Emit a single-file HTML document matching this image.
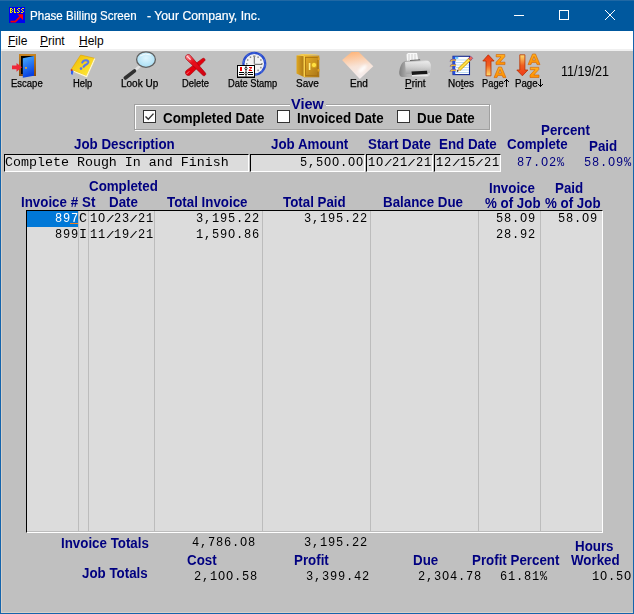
<!DOCTYPE html>
<html><head><meta charset="utf-8">
<style>
html,body{margin:0;padding:0;}
body{width:634px;height:614px;position:relative;overflow:hidden;background:#c0c0c0;font-family:"Liberation Sans",sans-serif;}
.a{position:absolute;}
.t{position:absolute;white-space:nowrap;line-height:16px;}
.b{font-family:"Liberation Sans",sans-serif;font-weight:bold;font-size:14px;color:#000080;transform:scaleX(0.952);transform-origin:0 0;}
.m{font-family:"Liberation Mono",monospace;font-size:13.33px;color:#000;letter-spacing:0.889px;transform:scaleX(0.9);transform-origin:0 0;}
.tb{font-family:"Liberation Sans",sans-serif;font-size:10px;color:#000;transform-origin:0 0;-webkit-text-stroke:0.25px #000;transform:scaleX(0.999);}
.box{position:absolute;background:#dcdcdc;border-top:1px solid #000;border-left:1px solid #000;border-right:1px solid #fff;border-bottom:1px solid #fff;box-sizing:border-box;}
.cb{position:absolute;width:13px;height:13px;box-sizing:border-box;border:1px solid #333;background:#fff;}
.sl{font-style:normal;display:inline-block;transform:translate(0.5px,1.6px) scale(1.25,0.62);}
.vl{position:absolute;width:1px;background:#bcbcbc;top:211px;height:320px;}
</style></head><body>
<!-- window frame -->
<div class="a" style="left:0;top:0;width:634px;height:614px;background:#c0c0c0;"></div>
<div class="a" style="left:0;top:0;width:1px;height:614px;background:#1464ac;"></div>
<div class="a" style="left:633px;top:0;width:1px;height:614px;background:#1464ac;"></div>
<div class="a" style="left:0;top:613px;width:634px;height:1px;background:#1464ac;"></div>
<div class="a" style="left:1px;top:51px;width:1px;height:562px;background:#d8d0c8;"></div>
<div class="a" style="left:1px;top:612px;width:632px;height:1px;background:#d8d0c8;"></div>
<!-- title bar -->
<div class="a" style="left:0;top:0;width:634px;height:31px;background:#00589e;"></div>
<div class="a" style="left:0;top:0;width:634px;height:1px;background:#2068a4;"></div>
<div class="t" style="left:30px;top:8px;font-size:12px;color:#fff;-webkit-text-stroke:0.2px #fff;transform:scaleX(0.963);transform-origin:0 0;">Phase Billing Screen</div>
<div class="t" style="left:147px;top:8px;font-size:12px;color:#fff;-webkit-text-stroke:0.2px #fff;transform:scaleX(1.02);transform-origin:0 0;">- Your Company, Inc.</div>
<!-- menu -->
<div class="a" style="left:1px;top:31px;width:632px;height:18px;background:#fff;"></div>
<div class="a" style="left:1px;top:49px;width:632px;height:2px;background:#f0f0f0;"></div>
<div class="t" style="left:8px;top:33px;font-size:12px;color:#000;"><u>F</u>ile</div>
<div class="t" style="left:40px;top:33px;font-size:12px;color:#000;"><u>P</u>rint</div>
<div class="t" style="left:79px;top:33px;font-size:12px;color:#000;"><u>H</u>elp</div>

<!-- toolbar labels -->
<div class="t tb" style="left:11px;top:76px;transform:scaleX(0.95);">Escape</div>
<div class="t tb" style="left:73px;top:76px;transform:scaleX(0.94);">Help</div>
<div class="t tb" style="left:121px;top:76px;">Look Up</div>
<div class="t tb" style="left:182px;top:76px;transform:scaleX(0.935);">Delete</div>
<div class="t tb" style="left:228px;top:76px;transform:scaleX(0.93);">Date Stamp</div>
<div class="t tb" style="left:296px;top:76px;">Save</div>
<div class="t tb" style="left:350px;top:76px;">End</div>
<div class="t tb" style="left:405px;top:76px;"><span style="text-decoration:underline">P</span>rint</div>
<div class="t tb" style="left:448px;top:76px;">No<span style="text-decoration:underline">t</span>es</div>
<div class="t tb" style="left:482px;top:76px;transform:scaleX(0.93);">Page</div>
<div class="t tb" style="left:515px;top:76px;transform:scaleX(0.97);">Page</div>
<div class="t" style="left:560.5px;top:63px;font-size:14px;color:#000;transform:scaleX(0.9);transform-origin:0 0;">11/19/21</div>

<!-- View group -->
<div class="a" style="left:135px;top:105px;width:356px;height:26px;box-sizing:border-box;border:1px solid #fff;"></div>
<div class="a" style="left:134px;top:104px;width:356px;height:26px;box-sizing:border-box;border:1px solid #a0a0a0;"></div>
<div class="a" style="left:290px;top:98px;width:36px;height:10px;background:#c0c0c0;"></div>
<div class="t b" style="left:291px;top:96px;font-size:14px;transform:scaleX(1.04);">View</div>
<div class="cb" style="left:143px;top:110px;"></div>
<div class="cb" style="left:277px;top:110px;"></div>
<div class="cb" style="left:397px;top:110px;"></div>
<div class="t b" style="left:163px;top:110px;color:#000;">Completed Date</div>
<div class="t b" style="left:297px;top:110px;color:#000;">Invoiced Date</div>
<div class="t b" style="left:417px;top:110px;color:#000;">Due Date</div>

<!-- job labels -->
<div class="t b" style="left:74px;top:136px;">Job Description</div>
<div class="t b" style="left:271px;top:136px;">Job Amount</div>
<div class="t b" style="left:368px;top:136px;">Start Date</div>
<div class="t b" style="left:439px;top:136px;">End Date</div>
<div class="t b" style="left:541px;top:122px;">Percent</div>
<div class="t b" style="left:507px;top:136px;">Complete</div>
<div class="t b" style="left:589px;top:138px;">Paid</div>

<div class="box" style="left:4px;top:154px;width:245px;height:18px;"></div>
<div class="box" style="left:250px;top:154px;width:115px;height:18px;"></div>
<div class="box" style="left:366px;top:154px;width:67px;height:18px;"></div>
<div class="box" style="left:434px;top:154px;width:67px;height:18px;"></div>
<div class="t m" style="left:5px;top:155px;letter-spacing:0;transform:scaleX(0.999);">Complete Rough In and Finish</div>
<div class="t m" style="left:300px;top:155px;">5,5OO.OO</div>
<div class="t m" style="left:368px;top:155px;">1O<i class="sl">/</i>21<i class="sl">/</i>21</div>
<div class="t m" style="left:436px;top:155px;">12<i class="sl">/</i>15<i class="sl">/</i>21</div>
<div class="t m" style="left:517px;top:155px;color:#000080;">87.O2%</div>
<div class="t m" style="left:584px;top:155px;color:#000080;">58.O9%</div>

<!-- grid headers -->
<div class="t b" style="left:89px;top:178px;">Completed</div>
<div class="t b" style="left:21px;top:194px;">Invoice #</div>
<div class="t b" style="left:82px;top:194px;">St</div>
<div class="t b" style="left:109px;top:194px;">Date</div>
<div class="t b" style="left:167px;top:194px;">Total Invoice</div>
<div class="t b" style="left:283px;top:194px;">Total Paid</div>
<div class="t b" style="left:383px;top:194px;">Balance Due</div>
<div class="t b" style="left:489px;top:180px;">Invoice</div>
<div class="t b" style="left:485px;top:195px;">% of Job</div>
<div class="t b" style="left:555px;top:180px;">Paid</div>
<div class="t b" style="left:545px;top:195px;">% of Job</div>

<!-- grid -->
<div class="a" style="left:26px;top:210px;width:577px;height:323px;background:#dcdcdc;box-sizing:border-box;border-top:1px solid #000;border-left:1px solid #000;border-right:1px solid #fff;border-bottom:1px solid #fff;"></div>
<div class="a" style="left:27px;top:531px;width:575px;height:1px;background:#bcbcbc;"></div>
<div class="vl" style="left:78px;"></div>
<div class="vl" style="left:88px;"></div>
<div class="vl" style="left:154px;"></div>
<div class="vl" style="left:262px;"></div>
<div class="vl" style="left:370px;"></div>
<div class="vl" style="left:478px;"></div>
<div class="vl" style="left:540px;"></div>
<div class="a" style="left:27px;top:211px;width:51px;height:16px;background:#0078d7;"></div>
<div class="a" style="left:70px;top:223px;width:8px;height:1px;background:#f08020;"></div>
<!-- row 1 -->
<div class="t m" style="left:55px;top:211px;color:#fff;">897</div>
<div class="t m" style="left:79px;top:211px;letter-spacing:0;transform:scaleX(0.999);">C</div>
<div class="t m" style="left:90px;top:211px;">1O<i class="sl">/</i>23<i class="sl">/</i>21</div>
<div class="t m" style="left:195.5px;top:211px;">3,195.22</div>
<div class="t m" style="left:303.5px;top:211px;">3,195.22</div>
<div class="t m" style="left:495.5px;top:211px;">58.O9</div>
<div class="t m" style="left:557.5px;top:211px;">58.O9</div>
<!-- row 2 -->
<div class="t m" style="left:55px;top:227px;">899</div>
<div class="t m" style="left:79px;top:227px;letter-spacing:0;transform:scaleX(0.999);">I</div>
<div class="t m" style="left:90px;top:227px;">11<i class="sl">/</i>19<i class="sl">/</i>21</div>
<div class="t m" style="left:195.5px;top:227px;">1,59O.86</div>
<div class="t m" style="left:495.5px;top:227px;">28.92</div>

<!-- totals -->
<div class="t b" style="left:61px;top:535px;">Invoice Totals</div>
<div class="t m" style="left:192px;top:535px;">4,786.O8</div>
<div class="t m" style="left:304px;top:535px;">3,195.22</div>
<div class="t b" style="left:575px;top:538px;">Hours</div>
<div class="t b" style="left:187px;top:552px;">Cost</div>
<div class="t b" style="left:294px;top:552px;">Profit</div>
<div class="t b" style="left:413px;top:552px;">Due</div>
<div class="t b" style="left:472px;top:552px;">Profit Percent</div>
<div class="t b" style="left:571px;top:552px;">Worked</div>
<div class="t b" style="left:82px;top:565px;">Job Totals</div>
<div class="t m" style="left:194px;top:569px;">2,1OO.58</div>
<div class="t m" style="left:306px;top:569px;">3,399.42</div>
<div class="t m" style="left:418px;top:569px;">2,3O4.78</div>
<div class="t m" style="left:500px;top:569px;">61.81%</div>
<div class="t m" style="left:592px;top:569px;">1O.5O</div>

<!-- ICONS -->
<svg class="a" style="left:0;top:0;" width="634" height="614" viewBox="0 0 634 614">
<defs>
<linearGradient id="gDoor" x1="0" y1="0" x2="0.3" y2="1"><stop offset="0" stop-color="#48b0ff"/><stop offset="1" stop-color="#0840e0"/></linearGradient>
<linearGradient id="gFrame" x1="0" y1="0" x2="0" y2="1"><stop offset="0" stop-color="#c88420"/><stop offset="1" stop-color="#8a4a08"/></linearGradient>
<linearGradient id="gBook" x1="0" y1="0" x2="1" y2="1"><stop offset="0" stop-color="#f0b800"/><stop offset="1" stop-color="#fff040"/></linearGradient>
<radialGradient id="gLens" cx="0.5" cy="0.4" r="0.6"><stop offset="0" stop-color="#e0f6ff"/><stop offset="1" stop-color="#a8def4"/></radialGradient>
<linearGradient id="gX" x1="0" y1="0" x2="1" y2="1"><stop offset="0" stop-color="#ff9aa0"/><stop offset="0.35" stop-color="#e8101c"/><stop offset="1" stop-color="#d00010"/></linearGradient>
<linearGradient id="gSafe" x1="0" y1="0" x2="1" y2="1"><stop offset="0" stop-color="#e8b028"/><stop offset="1" stop-color="#a87418"/></linearGradient>
<linearGradient id="gSafeL" x1="0" y1="0" x2="1" y2="0"><stop offset="0" stop-color="#e0a820"/><stop offset="1" stop-color="#a87418"/></linearGradient>
<linearGradient id="gEnd" x1="0" y1="0" x2="0.2" y2="1"><stop offset="0" stop-color="#ffb070"/><stop offset="0.6" stop-color="#f8e4d8"/><stop offset="1" stop-color="#f4ecec"/></linearGradient>
<linearGradient id="gPrn" x1="0" y1="0" x2="0" y2="1"><stop offset="0" stop-color="#f0f0f0"/><stop offset="0.45" stop-color="#d4d4d4"/><stop offset="1" stop-color="#a0a0a0"/></linearGradient>
<linearGradient id="gPrnL" x1="0" y1="0" x2="1" y2="0"><stop offset="0" stop-color="#808080"/><stop offset="0.25" stop-color="#b0b0b0"/><stop offset="1" stop-color="#d8d8d8"/></linearGradient>
<linearGradient id="gArrUp" x1="0" y1="0" x2="0" y2="1"><stop offset="0" stop-color="#f03818"/><stop offset="0.5" stop-color="#f06020"/><stop offset="1" stop-color="#ffe070"/></linearGradient>
<linearGradient id="gArrDn" x1="0" y1="1" x2="0" y2="0"><stop offset="0" stop-color="#f03818"/><stop offset="0.5" stop-color="#f06020"/><stop offset="1" stop-color="#ffe070"/></linearGradient>
<linearGradient id="gLet" x1="0" y1="0" x2="0" y2="1"><stop offset="0" stop-color="#ffb020"/><stop offset="1" stop-color="#ff9000"/></linearGradient>
</defs>

<!-- title icon BLSS -->
<rect x="9" y="7" width="16" height="16" fill="#0000f0"/>
<g fill="#f0f000">
<rect x="10" y="8" width="1" height="5"/><rect x="11" y="8" width="1" height="1"/><rect x="11" y="10" width="1" height="1"/><rect x="11" y="12" width="1" height="1"/><rect x="12" y="9" width="1" height="1"/><rect x="12" y="11" width="1" height="1"/>
<rect x="14" y="8" width="1" height="5"/><rect x="15" y="12" width="1" height="1"/>
<rect x="18" y="8" width="2" height="1"/><rect x="17" y="9" width="1" height="1"/><rect x="18" y="10" width="1" height="1"/><rect x="19" y="11" width="1" height="1"/><rect x="17" y="12" width="2" height="1"/>
<rect x="22" y="8" width="2" height="1"/><rect x="21" y="9" width="1" height="1"/><rect x="22" y="10" width="1" height="1"/><rect x="23" y="11" width="1" height="1"/><rect x="21" y="12" width="2" height="1"/>
</g>
<path d="M10.5 21.6 L15.3 21.6 L20.3 16.6" stroke="#f00000" stroke-width="1.7" fill="none"/>
<path d="M17.3 14.3 L23 14.3 L23 20 Z" fill="#ff0000"/>

<!-- Escape door -->
<rect x="19" y="54" width="17" height="22" fill="url(#gFrame)"/>
<rect x="21" y="56" width="13" height="18" fill="#000"/>
<path d="M22.8 58.3 L34 56 L34 75.8 L22.8 77.8 Z" fill="url(#gDoor)"/>
<rect x="25" y="67" width="2" height="1.8" fill="#d0a040"/>
<path d="M12 65.5 H16.5 V63 L22 67.3 L16.5 71.8 V69.2 H12 Z" fill="#f02838"/>

<!-- Help book -->
<path d="M80.6 55 L94.8 58.3 L86.7 76.3 L71 69.7 Z" fill="url(#gBook)" stroke="#e0a000" stroke-width="0.6"/>
<path d="M73 71 L86.7 76.6 L94.8 58.5" fill="none" stroke="#fff8d0" stroke-width="1.2"/>
<path d="M82.2 62.6 Q83.2 60.2 86 60.3 Q88.8 60.6 88.2 62.6 Q87.5 64.2 85 65.2 L83.6 66.8" fill="none" stroke="#5a78e8" stroke-width="2.1" stroke-linecap="round"/>
<circle cx="81" cy="68.6" r="1.3" fill="#5a78e8"/>
<path d="M71 70 L73.5 71 L72.5 75 L71 74 Z" fill="#3060f0"/>
<rect x="70.8" y="69.3" width="1.6" height="1.6" fill="#d02020"/>

<!-- Look Up magnifier -->
<path d="M140 66 L134 71" stroke="#e0e0e0" stroke-width="2.6"/>
<path d="M134.5 70.8 L125.3 78" stroke="#303030" stroke-width="3.6" stroke-linecap="round"/>
<ellipse cx="146" cy="59.6" rx="9.4" ry="7.8" fill="url(#gLens)" stroke="#606060" stroke-width="1.3"/>
<path d="M140 56 Q145 52.5 151 55" stroke="#ffffff" stroke-width="1" fill="none" opacity="0.8"/>

<!-- Delete X -->
<path d="M202.37 58.68 L186.53 70.39 L185.93 71.07 L185.58 71.91 L185.51 72.82 L185.72 73.70 L186.19 74.47 L186.87 75.07 L187.71 75.42 L188.62 75.49 L189.50 75.28 L190.27 74.81 L204.43 61.12 L204.76 60.74 L204.95 60.28 L205.00 59.78 L204.88 59.29 L204.62 58.87 L204.24 58.54 L203.78 58.35 L203.28 58.30 L202.79 58.42 Z" fill="#e4000c" stroke="#a8000a" stroke-width="0.7"/>
<path d="M186.26 59.22 L202.76 75.16 L203.18 75.49 L203.68 75.67 L204.21 75.69 L204.72 75.54 L205.16 75.24 L205.49 74.82 L205.67 74.32 L205.69 73.79 L205.54 73.28 L205.24 72.84 L190.34 55.38 L189.65 54.85 L188.82 54.55 L187.95 54.52 L187.11 54.77 L186.38 55.26 L185.85 55.95 L185.55 56.78 L185.52 57.65 L185.77 58.49 Z" fill="url(#gX)" stroke="#a8000a" stroke-width="0.7"/>
<path d="M187.2 56.3 L190.2 59.2" stroke="#ffd0d8" stroke-width="1.3" stroke-linecap="round"/>
<path d="M186.8 73.8 L189 71.6" stroke="#ff8090" stroke-width="0.9" stroke-linecap="round"/>
<!-- Date Stamp clock + calendar -->
<circle cx="254.3" cy="63.8" r="10.9" fill="#f2f2f2" stroke="#2a4ccc" stroke-width="2.3"/>
<circle cx="254.3" cy="63.8" r="10.9" fill="none" stroke="#7aa0ff" stroke-width="0.6" opacity="0.7" stroke-dasharray="3 4"/>
<rect x="253.20" y="55.40" width="2.2" height="1.6" fill="#8c8c8c"/><rect x="257.40" y="56.42" width="1.4" height="1.6" fill="#8c8c8c"/><rect x="260.18" y="59.20" width="1.4" height="1.6" fill="#8c8c8c"/><rect x="261.20" y="63.00" width="1.4" height="1.6" fill="#8c8c8c"/><rect x="260.18" y="66.80" width="1.4" height="1.6" fill="#8c8c8c"/><rect x="257.40" y="69.58" width="1.4" height="1.6" fill="#8c8c8c"/><rect x="253.60" y="70.60" width="1.4" height="1.6" fill="#8c8c8c"/><rect x="249.80" y="69.58" width="1.4" height="1.6" fill="#8c8c8c"/><rect x="247.02" y="66.80" width="1.4" height="1.6" fill="#8c8c8c"/><rect x="246.00" y="63.00" width="1.4" height="1.6" fill="#8c8c8c"/><rect x="247.02" y="59.20" width="1.4" height="1.6" fill="#8c8c8c"/><rect x="249.80" y="56.42" width="1.4" height="1.6" fill="#8c8c8c"/>
<path d="M254.3 63.8 L254.3 57 M254.3 64.3 L262 64.39999999999999" stroke="#606060" stroke-width="1"/>
<rect x="237.5" y="65.5" width="17" height="12" fill="#fff" stroke="#000" stroke-width="1"/>
<rect x="237" y="76.5" width="18" height="1.3" fill="#000"/>
<rect x="240" y="67" width="2" height="4" fill="#f00000"/>
<path d="M249 67 h3 v1 l-2 2 h2 v1 h-3.2 v-1 l2 -2 h-1.8z" fill="#f00000"/>
<rect x="239" y="72" width="5" height="1" fill="#000"/><rect x="239" y="74" width="5" height="1" fill="#000"/>
<rect x="248" y="72" width="5" height="1" fill="#000"/><rect x="248" y="74" width="5" height="1" fill="#000"/>
<rect x="245.5" y="66" width="1" height="11" fill="#303030"/><circle cx="246" cy="68.5" r="1.1" fill="#fff" stroke="#000" stroke-width="0.8"/><circle cx="246" cy="73.5" r="1.1" fill="#fff" stroke="#000" stroke-width="0.8"/>

<!-- Save safe -->
<path d="M296.5 55.5 L304.5 54.3 L304.5 77.3 L296.5 73.5 Z" fill="url(#gSafeL)"/>
<path d="M296.5 55.5 L302 54 L319 54.6 L304.5 56.2 Z" fill="#f4cc50"/>
<rect x="304" y="55.5" width="15.3" height="21.8" fill="url(#gSafe)"/>
<rect x="305.5" y="57.5" width="12.3" height="18" fill="none" stroke="#a87010" stroke-width="0.8"/>
<rect x="303.5" y="56" width="1.5" height="21" fill="#f8d048"/>
<rect x="308.8" y="63" width="1.6" height="7" fill="#fff090"/>
<circle cx="314" cy="65" r="2.6" fill="#ffe040" stroke="#c89010" stroke-width="0.6"/>
<rect x="317.5" y="57.5" width="2" height="2.5" fill="#e0a020"/><rect x="317.5" y="69" width="2" height="2.5" fill="#e0a020"/>

<!-- End -->
<path d="M342.1 60 L351.6 52.1 L358.8 52.1 L373.3 66.3 L359.8 78.9 Z" fill="url(#gEnd)"/>
<filter id="blur1" x="-50%" y="-50%" width="200%" height="200%"><feGaussianBlur stdDeviation="0.9"/></filter><ellipse cx="362.5" cy="69" rx="5.5" ry="2.2" transform="rotate(-42 362.5 69)" fill="#ffffff" opacity="0.85" filter="url(#blur1)"/>

<!-- Print -->
<path d="M406.5 54.5 L408 53 L417 53 L418.5 61 L407 61 Z" fill="#f8f8f8"/>
<path d="M409 54 V61 M412 54 V61 M415 54 V61" stroke="#c0c0c0" stroke-width="0.7"/>
<path d="M410 60 L420 59.5 L421 62 L410 62.5 Z" fill="#303030"/>
<path d="M404 61.5 Q406 60.5 412 60.5 L426 60 Q430 60.5 431 65 L430 74 Q429.5 77 426 77 L402 77 Q399 76.5 399.2 72 Q400 64 404 61.5 Z" fill="url(#gPrnL)"/>
<path d="M405 62 L428 61 Q430.5 62 430.5 66 L430 73 L406 74 Z" fill="url(#gPrn)" opacity="0.85"/>
<path d="M411.5 71.5 L427 70.8 L427.5 74.2 L412 75 Z" fill="#181818"/><path d="M412 75 L427.5 74.2 L428 76 L412 76.5 Z" fill="#e8e8e8"/>

<!-- Notes -->
<rect x="453" y="56.3" width="16.5" height="18.3" fill="#fff" stroke="#142890" stroke-width="1.1"/>
<g stroke="#a8d0f0" stroke-width="0.8"><path d="M456 60h13 M456 62.5h13 M456 65h13 M456 67.5h13 M456 70h13 M456 72.5h13"/></g>
<rect x="453" y="56.5" width="2.3" height="18" fill="#2050e0"/>
<rect x="455.3" y="56.8" width="3" height="2" fill="#60c0ff"/>
<g fill="none" stroke="#7050a0" stroke-width="2.2"><path d="M456 60.2 Q450.5 59.5 450.8 61.5"/><path d="M456 65.4 Q450.5 64.7 450.8 66.7"/><path d="M456 70.4 Q450.5 69.7 450.8 71.7"/></g>
<g fill="none" stroke="#f4c830" stroke-width="1.1"><path d="M456 60.2 Q450.5 59.5 450.8 61.5"/><path d="M456 65.4 Q450.5 64.7 450.8 66.7"/><path d="M456 70.4 Q450.5 69.7 450.8 71.7"/></g>
<path d="M460.2 70.49 L470.64 60.42 L468.56 58.26 L458.12 68.33 Z" fill="#f8d020" stroke="#a07000" stroke-width="0.45"/>
<path d="M459.2 69.4 L469.6 59.34" stroke="#fff090" stroke-width="0.7"/>
<path d="M457 71.5 L460.2 70.49 L458.12 68.33 Z" fill="#e0b080"/>
<path d="M457 71.5 L458.3 71.1 L457.5 70.2 Z" fill="#202020" stroke="#202020" stroke-width="0.6"/>
<path d="M470.64 60.42 L472.78 58.33 L470.7 56.17 L468.56 58.26 Z" fill="#f06858" stroke="#602080" stroke-width="0.5"/>
<!-- Page up -->
<path d="M488.3 54.8 L494.1 61 L491 61 L491 75.8 L486 75.8 L486 61 L482.8 61 Z" fill="url(#gArrUp)" stroke="#b83000" stroke-width="0.8"/>
<path d="M496.2 54.5 H504.8 V56.8 L499.8 62.2 H505 V64.6 H496 V62.3 L501 56.9 H496.2 Z" fill="url(#gLet)" stroke="#d06000" stroke-width="0.6"/>
<path d="M498.5 67 H501.5 L506 77.6 H503 L502.2 75.4 H497.8 L497 77.6 H494 Z M498.6 73.2 H501.4 L500 69.5 Z" fill="url(#gLet)" stroke="#d06000" stroke-width="0.6" fill-rule="evenodd"/>

<!-- Page down -->
<path d="M519.8 54.8 L524.9 54.8 L524.9 70 L527.9 70 L522.4 75.8 L516.8 70 L519.8 70 Z" fill="url(#gArrDn)" stroke="#b83000" stroke-width="0.8"/>
<path d="M532.5 54 H535.5 L540 64.6 H537 L536.2 62.4 H531.8 L531 64.6 H528 Z M532.6 60.2 H535.4 L534 56.5 Z" fill="url(#gLet)" stroke="#d06000" stroke-width="0.6" fill-rule="evenodd"/>
<path d="M530.2 67.3 H538.8 V69.6 L533.8 75 H539 V77.5 H530 V75.1 L535 69.7 H530.2 Z" fill="url(#gLet)" stroke="#d06000" stroke-width="0.6"/>

<!-- title buttons -->
<rect x="514" y="15" width="10" height="1" fill="#fff"/>
<rect x="559.5" y="10.5" width="9" height="9" fill="none" stroke="#fff" stroke-width="1"/>
<path d="M605 10 L615 20 M615 10 L605 20" stroke="#fff" stroke-width="1"/>

<!-- checkmark -->
<path d="M145.5 116.5 L148.3 119.3 L153.5 113.6" stroke="#333" stroke-width="1.4" fill="none"/>

<!-- page arrows in labels -->
<g fill="#000"><rect x="506" y="79" width="1" height="8"/><rect x="505" y="80" width="3" height="1"/><rect x="504" y="81" width="1" height="1"/><rect x="508" y="81" width="1" height="1"/></g>
<g fill="#000"><rect x="540" y="79" width="1" height="8"/><rect x="539" y="85" width="3" height="1"/><rect x="538" y="84" width="1" height="1"/><rect x="542" y="84" width="1" height="1"/></g>
</svg>

</body></html>
